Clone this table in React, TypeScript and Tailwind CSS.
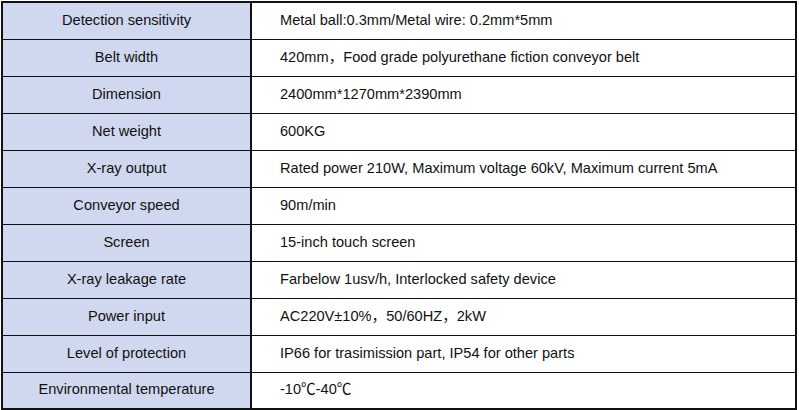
import React from 'react';

const ROWS: [string, string][] = [
  ['Detection sensitivity', 'Metal ball:0.3mm/Metal wire: 0.2mm*5mm'],
  ['Belt width', '420mm，Food grade polyurethane fiction conveyor belt'],
  ['Dimension', '2400mm*1270mm*2390mm'],
  ['Net weight', '600KG'],
  ['X-ray output', 'Rated power 210W, Maximum voltage 60kV, Maximum current 5mA'],
  ['Conveyor speed', '90m/min'],
  ['Screen', '15-inch touch screen'],
  ['X-ray leakage rate', 'Farbelow 1usv/h, Interlocked safety device'],
  ['Power input', 'AC220V±10%，50/60HZ，2kW'],
  ['Level of protection', 'IP66 for trasimission part, IP54 for other parts'],
  ['Environmental temperature', '-10℃-40℃'],
];

export default function App() {
  return (
    <div className="w-[799px] h-[410px] bg-white pl-px pt-px">
      <table
        className="w-[796px] border-collapse border-2 border-[#111] text-[14.6px] text-[#111]"
        style={{ fontFamily: '"Liberation Sans", Arial, "Noto Sans CJK SC", sans-serif' }}
      >
        <tbody>
          {ROWS.map(([label, value]) => (
            <tr key={label} className="h-[37px]">
              <td className="w-[249px] bg-[#cfd8ee] border border-[#111] border-r-2 text-center p-0">
                {label}
              </td>
              <td className="border border-[#111] pl-[28px] p-0">{value}</td>
            </tr>
          ))}
        </tbody>
      </table>
    </div>
  );
}
